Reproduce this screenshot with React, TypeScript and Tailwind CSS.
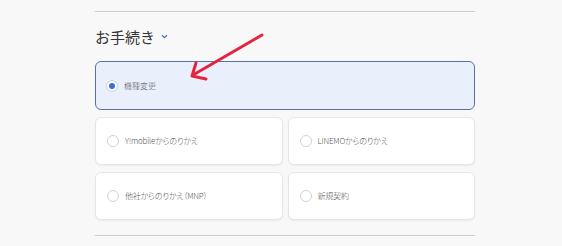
const options = [
  { label: "Y!mobileからのりかえ" },
  { label: "LINEMOからのりかえ" },
  { label: "他社からのりかえ（MNP）" },
  { label: "新規契約" },
];

function Radio({ checked }: { checked?: boolean }) {
  return (
    <span
      className={
        "flex h-[12px] w-[12px] shrink-0 items-center justify-center rounded-full border bg-white " +
        (checked ? "border-[#c9d3e6]" : "border-[#d2d2d2]")
      }
    >
      {checked && <span className="h-[6px] w-[6px] rounded-full bg-[#3a6fd8]" />}
    </span>
  );
}

export default function App() {
  return (
    <div
      className="relative h-[246px] w-[562px] overflow-hidden bg-[#f8f8f8]"
      style={{ fontFamily: '"Noto Sans CJK JP", "Noto Sans", sans-serif' }}
    >
      <div className="ml-[95px] w-[380px] pt-[11px]">
        <div className="border-t border-[#cdcdcd]" />

        <div className="mt-[15px] flex h-[18px] items-center gap-[6px]">
          <h2 className="text-[15px] leading-none text-[#333]">お手続き</h2>
          <svg width="7" height="5" viewBox="0 0 7 5" className="mt-[1px]">
            <path d="M1 1.2 L3.5 3.7 L6 1.2" fill="none" stroke="#4a74c4" strokeWidth="1.3" />
          </svg>
        </div>

        <div className="mt-[16px] flex h-[49px] items-center gap-[6px] rounded-[6px] border border-[#5573a4] bg-[#eaf0fb] pl-[10px]">
          <Radio checked />
          <span className="text-[8px] font-light text-[#555]">機種変更</span>
        </div>

        <div className="mt-[7px] grid grid-cols-2 gap-x-[5px] gap-y-[7px]">
          {options.map((o) => (
            <div
              key={o.label}
              className="flex h-[48px] items-center gap-[6px] rounded-[6px] border border-[#e6e6e6] bg-white pl-[11px] shadow-[0_1px_2px_rgba(0,0,0,0.06)]"
            >
              <Radio />
              <span className="text-[8px] font-light tracking-[-0.2px] text-[#555] [font-feature-settings:'palt']">
                {o.label}
              </span>
            </div>
          ))}
        </div>

        <div className="mt-[15px] border-t border-[#cdcdcd]" />
      </div>

      <svg className="absolute left-0 top-0" width="562" height="246">
        <g stroke="#e3263d" strokeWidth="3" strokeLinecap="round" strokeLinejoin="round" fill="none">
          <path d="M262 35 L193 75" />
          <path d="M196 63 L192 76 L206 79" />
        </g>
      </svg>
    </div>
  );
}
